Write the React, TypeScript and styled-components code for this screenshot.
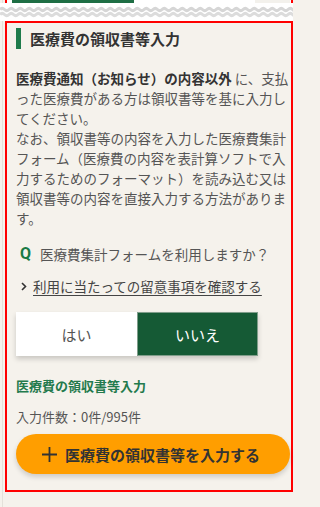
import { FC } from "react";
import styled, { createGlobalStyle } from "styled-components";

const GlobalStyle = createGlobalStyle`
   html, body {
      margin: 0;
      padding: 0;
      background-color: #f5f2ec;
      overflow: hidden;
   }
   body {
      font-family: "Noto Sans CJK JP", "Noto Sans", sans-serif;
      color: #555;
   }
`;

const Page = styled.div`
   width: 298px;
   min-height: 507px;
   box-sizing: border-box;
   border-left: 1px solid #e4e1da;
   margin-left: 2px;
`;

const PrevTail = styled.div`
   display: flex;
   align-items: stretch;
   height: 3px;
   margin-left: 2px;
   width: 288px;
   box-sizing: border-box;
   border-left: 2px solid #ff0000;
   border-right: 2px solid #ff0000;
   background-color: #ffffff;
`;

const TailBar = styled.div<{ $left: number; $width: number; $color: string }>`
   margin-left: ${(p) => p.$left}px;
   width: ${(p) => p.$width}px;
   background-color: ${(p) => p.$color};
`;

const WaveStrip = styled.div`
   height: 18px;
   width: 293px;
   margin-left: -3px;
   background-color: #ffffff;
   display: flex;
   align-items: center;
`;

const Frame = styled.section`
   margin-left: 2px;
   width: 288px;
   box-sizing: border-box;
   border: 2px solid #ff0000;
   padding: 5px 1px 16px 9px;
`;

const Heading = styled.h2`
   margin: 0;
   display: flex;
   align-items: center;
   gap: 9px;
   font-size: 15px;
   line-height: 21px;
   font-weight: 700;
   color: #333;

   &::before {
      content: "";
      width: 5px;
      height: 21px;
      background-color: #1e7b4b;
   }
`;

const Lead = styled.p`
   margin: 19px 0 0;
   font-size: 13.5px;
   line-height: 20px;
   color: #555;
`;

const Strong = styled.strong`
   color: #333;
   font-weight: 700;
`;

const Question = styled.div`
   margin-top: 16px;
   display: flex;
   align-items: center;
   gap: 9px;
   padding-left: 4px;
   font-size: 13.5px;
   line-height: 20px;
`;

const QMark = styled.span`
   font-family: "Roboto", "Liberation Sans", sans-serif;
   font-weight: 700;
   font-size: 16px;
   color: #1a7a45;
`;

const NoteLink = styled.a`
   margin-top: 12px;
   display: flex;
   align-items: center;
   gap: 6px;
   padding-left: 5px;
   font-size: 13.5px;
   line-height: 20px;
   color: #333;
   text-decoration: none;

   span {
      text-decoration: underline;
      text-underline-offset: 3px;
      color: #444;
   }
`;

const Toggle = styled.div`
   margin-top: 16px;
   display: flex;
   width: 242px;
   height: 44px;
   box-shadow: 0 3px 5px rgba(0, 0, 0, 0.18);
`;

const ToggleButton = styled.button<{ $active?: boolean }>`
   all: unset;
   flex: 1;
   display: flex;
   align-items: center;
   justify-content: center;
   box-sizing: border-box;
   font-family: "Noto Sans CJK JP", sans-serif;
   font-size: 15px;
   cursor: pointer;
   background-color: ${(p) => (p.$active ? "#155a35" : "#ffffff")};
   color: ${(p) => (p.$active ? "#ffffff" : "#555")};
   border: 1px solid ${(p) => (p.$active ? "#7f9d8a" : "#ffffff")};
`;

const SubTitle = styled.h3`
   margin: 20px 0 0;
   font-size: 13px;
   line-height: 20px;
   font-weight: 700;
   color: #237a4d;
`;

const Count = styled.div`
   margin-top: 11px;
   font-size: 13px;
   line-height: 20px;
   color: #555;
`;

const AddButton = styled.button`
   all: unset;
   margin-top: 7px;
   width: 274px;
   height: 40px;
   box-sizing: border-box;
   border-radius: 20px;
   background-color: #ff9e00;
   box-shadow: 0 3px 5px rgba(0, 0, 0, 0.16);
   display: flex;
   align-items: center;
   justify-content: center;
   gap: 8px;
   padding-right: 4px;
   font-family: "Noto Sans CJK JP", sans-serif;
   font-size: 15px;
   font-weight: 700;
   color: #333;
   cursor: pointer;
`;

const wavePath = (y: number): string => {
   let d = `M0 ${y}`;
   for (let x = 0; x < 300; x += 9) {
      d += ` q2.25 -2.2 4.5 0 t4.5 0`;
   }
   return d;
};

const Wave: FC = () => (
   <svg width="293" height="14" viewBox="0 0 293 14">
      <path d={wavePath(4.5)} fill="none" stroke="#d6d6d6" strokeWidth="3" />
      <path d={wavePath(9.5)} fill="none" stroke="#dcdcdc" strokeWidth="3" />
   </svg>
);

const Chevron: FC = () => (
   <svg width="6" height="9" viewBox="0 0 6 9">
      <path d="M1 1l3.5 3.5L1 8" fill="none" stroke="#333" strokeWidth="1.6" />
   </svg>
);

const Plus: FC = () => (
   <svg width="15" height="15" viewBox="0 0 15 15">
      <path d="M7.5 0v15M0 7.5h15" stroke="#333" strokeWidth="1.8" />
   </svg>
);

export default function App() {
   return (
      <>
         <GlobalStyle />
         <Page>
            <PrevTail>
               <TailBar $left={5} $width={122} $color="#1e6e44" />
               <TailBar $left={121} $width={35} $color="#f3f1ec" />
            </PrevTail>
            <WaveStrip>
               <Wave />
            </WaveStrip>
            <Frame>
               <Heading>医療費の領収書等入力</Heading>
               <Lead>
                  <Strong>医療費通知（お知らせ）の内容以外</Strong> に、支払った医療費がある方は領収書等を基に入力してください。
                  <br />
                  なお、領収書等の内容を入力した医療費集計フォーム（医療費の内容を表計算ソフトで入力するためのフォーマット）を読み込む又は領収書等の内容を直接入力する方法があります。
               </Lead>
               <Question>
                  <QMark>Q</QMark>
                  医療費集計フォームを利用しますか？
               </Question>
               <NoteLink href="#">
                  <Chevron />
                  <span>利用に当たっての留意事項を確認する</span>
               </NoteLink>
               <Toggle>
                  <ToggleButton>はい</ToggleButton>
                  <ToggleButton $active>いいえ</ToggleButton>
               </Toggle>
               <SubTitle>医療費の領収書等入力</SubTitle>
               <Count>入力件数：0件/995件</Count>
               <AddButton>
                  <Plus />
                  医療費の領収書等を入力する
               </AddButton>
            </Frame>
         </Page>
      </>
   );
}
